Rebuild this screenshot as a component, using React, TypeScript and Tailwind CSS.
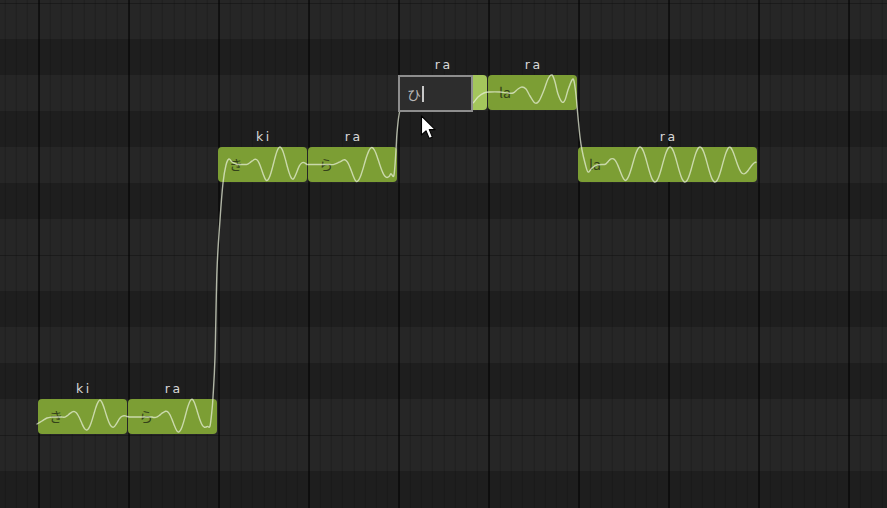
import React from "react";

const BEAT = 90;
const X0 = 38;

type Row = { h: number; dark: boolean; line?: boolean };
const rows: Row[] = [
  { h: 3, dark: false },
  { h: 36, dark: false, line: true },
  { h: 36, dark: true },
  { h: 36, dark: false },
  { h: 36, dark: true },
  { h: 36, dark: false },
  { h: 36, dark: true },
  { h: 36, dark: false },
  { h: 36, dark: false, line: true },
  { h: 36, dark: true },
  { h: 36, dark: false },
  { h: 36, dark: true },
  { h: 36, dark: false },
  { h: 36, dark: false, line: true },
  { h: 36, dark: true },
];

type Note = { beat: number; beats: number; top: number; lyric: string; label: string; selected?: boolean };
const notes: Note[] = [
  { beat: 0, beats: 1, top: 399, lyric: "き", label: "ki" },
  { beat: 1, beats: 1, top: 399, lyric: "ら", label: "ra" },
  { beat: 2, beats: 1, top: 147, lyric: "き", label: "ki" },
  { beat: 3, beats: 1, top: 147, lyric: "ら", label: "ra" },
  { beat: 4, beats: 1, top: 75, lyric: "", label: "ra", selected: true },
  { beat: 5, beats: 1, top: 75, lyric: "la", label: "ra" },
  { beat: 6, beats: 2, top: 147, lyric: "la", label: "ra" },
];

type P = [number, number];

function envAt(env: P[], x: number) {
  if (x <= env[0][0]) return env[0][1];
  for (let i = 0; i < env.length - 1; i++) {
    const [xa, ya] = env[i];
    const [xb, yb] = env[i + 1];
    if (x >= xa && x <= xb) return ya + ((yb - ya) * (x - xa)) / (xb - xa || 1);
  }
  return env[env.length - 1][1];
}

function vib(x0: number, x1: number, yc: number, peak: number, period: number, env: P[]): P[] {
  const out: P[] = [];
  for (let x = x0; x <= x1; x += 1.5) {
    const a = envAt(env, x);
    out.push([x, yc - a * Math.cos((2 * Math.PI * (x - peak)) / period)]);
  }
  return out;
}

const pts: P[] = [
  [37, 424], [42, 421], [47, 418], [52, 417],
  ...vib(55, 128, 417, 100, 28, [[55, 0], [62, 0], [72, 5], [86, 13], [100, 17], [114, 10], [122, 3], [128, 0]]),
  ...vib(129.5, 208, 417, 192, 28, [[129, 0], [152, 0], [164, 5], [178, 15], [192, 18], [206, 10], [208, 10]]),
  [210, 426], [212, 410], [213, 397], [215, 357], [217, 270], [220, 220], [223, 183], [226, 165], [229, 159], [232, 162], [236, 164],
  ...vib(238, 307, 164.5, 280, 27, [[238, 0], [245, 0], [253, 4], [266, 16], [280, 17.5], [293, 15], [301, 5], [307, 0]]),
  ...vib(308.5, 392, 164.5, 372, 31, [[308, 0], [330, 0], [341, 3], [356, 17], [372, 17], [387, 13], [392, 12]]),
  [394, 175], [396, 150], [397, 133], [399, 115], [402, 104], [410, 96], [430, 93], [460, 95], [470, 102], [473, 103], [478, 97], [484, 93],
  [490, 92], [500, 92], [508, 93], [513, 93], [518, 89], [522, 87], [526, 89], [530, 96], [535, 103], [539, 101], [544, 90], [548, 79],
  [552, 75], [555, 82], [558, 94], [562, 102], [565, 100], [568, 90], [572, 80], [574, 81], [576, 95], [578, 117], [580, 137], [582, 150],
  [585, 163], [588, 172], [592, 168], [597, 165],
  ...vib(603, 757, 164.5, 640, 30, [[603, 0], [605, 0], [610, 5], [625, 16], [640, 17.5], [730, 17.5], [745, 9], [757, 3]]),
];

function smooth(p: P[]) {
  let d = `M${p[0][0]} ${p[0][1].toFixed(2)}`;
  for (let i = 0; i < p.length - 1; i++) {
    const p0 = p[i - 1] || p[i];
    const p1 = p[i];
    const p2 = p[i + 1];
    const p3 = p[i + 2] || p2;
    const c1x = p1[0] + (p2[0] - p0[0]) / 6;
    const c1y = p1[1] + (p2[1] - p0[1]) / 6;
    const c2x = p2[0] - (p3[0] - p1[0]) / 6;
    const c2y = p2[1] - (p3[1] - p1[1]) / 6;
    d += ` C${c1x.toFixed(2)} ${c1y.toFixed(2)} ${c2x.toFixed(2)} ${c2y.toFixed(2)} ${p2[0].toFixed(2)} ${p2[1].toFixed(2)}`;
  }
  return d;
}

function NoteView({ n }: { n: Note }) {
  return (
    <div
      className="absolute flex flex-col"
      style={{ left: X0 + n.beat * BEAT, top: n.top - 17, width: n.beats * BEAT - 1 }}
    >
      <div className="h-[17px] text-center text-[12.5px] leading-[14px] tracking-[2.5px] pl-[2.5px] text-[#d8d8d8] font-['DejaVu_Sans',sans-serif]">
        {n.label}
      </div>
      <div
        className={`h-[35px] rounded-[4px] flex items-start ${n.selected ? "bg-[#a4c65c]" : "bg-[#7c9e34]"}`}
      >
        {n.selected ? (
          <div className="relative z-20 w-[75px] h-[37px] shrink-0 border-[2.5px] border-[#8e8e8e] bg-[#2d2d2d] flex items-center pl-[7px]">
            <span className="text-[14px] leading-[18px] text-[#b8b8b8] font-['Noto_Sans_CJK_JP',sans-serif]">ひ</span>
            <span className="ml-[1px] w-[1.5px] h-[16px] bg-[#c8c8c8]" />
          </div>
        ) : (
          <div className="h-full flex items-center pl-[11px] pb-[1px] text-[14px] text-[#34421a] font-['Noto_Sans_CJK_JP','Noto_Sans',sans-serif]">
            {n.lyric}
          </div>
        )}
      </div>
    </div>
  );
}

export default function App() {
  return (
    <div className="relative w-[887px] h-[508px] overflow-hidden bg-[#1e1e1e] select-none">
      <div className="flex flex-col">
        {rows.map((r, i) => (
          <div
            key={i}
            className={`shrink-0 ${r.dark ? "bg-[#1e1e1e]" : "bg-[#262626]"} ${r.line ? "border-t border-[#1b1b1b]" : ""}`}
            style={{ height: r.h }}
          />
        ))}
      </div>

      <div className="pointer-events-none absolute inset-0 bg-[image:repeating-linear-gradient(90deg,rgba(0,0,0,0.16)_0px,rgba(0,0,0,0.16)_1px,transparent_1px,transparent_11.25px)] bg-[position:4.75px_0]" />
      <div className="pointer-events-none absolute inset-0 bg-[image:repeating-linear-gradient(90deg,rgba(0,0,0,0.5)_0px,rgba(0,0,0,0.5)_2px,transparent_2px,transparent_90px)] bg-[position:38px_0]" />

      {notes.map((n, i) => (
        <NoteView key={i} n={n} />
      ))}

      <svg className="pointer-events-none absolute inset-0 z-10" width="887" height="508" viewBox="0 0 887 508">
        <path d={smooth(pts)} fill="none" stroke="#e9f0da" strokeOpacity="0.72" strokeWidth="1.4" strokeLinejoin="round" strokeLinecap="round" />
      </svg>

      <svg className="pointer-events-none absolute left-[420px] top-[115px] z-30" width="20" height="28" viewBox="0 0 20 28">
        <path d="M1.5 1 L1.5 20 L6 15.8 L9.2 23.5 L12.4 22.1 L9.3 14.6 L15.2 14.6 Z" fill="#ffffff" stroke="#000000" strokeWidth="1.1" strokeLinejoin="round" />
      </svg>
    </div>
  );
}
